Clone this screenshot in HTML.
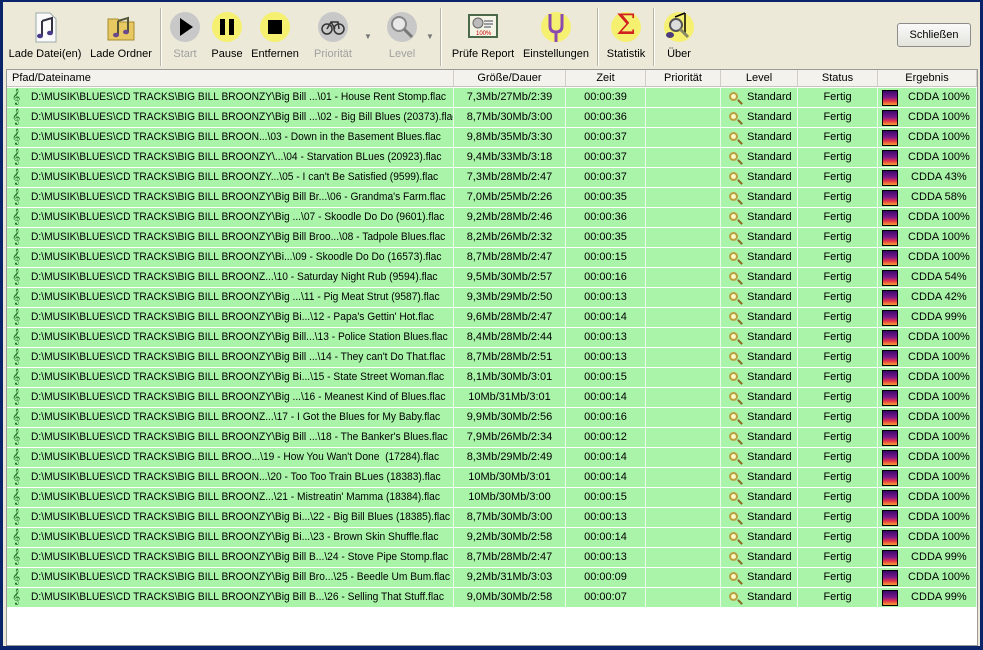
<!DOCTYPE html>
<html><head><meta charset="utf-8">
<style>
*{margin:0;padding:0;box-sizing:border-box}
html,body{width:983px;height:650px;overflow:hidden;background:#0a246a}
body{font-family:"Liberation Sans",Tahoma,sans-serif;font-size:11px;color:#000;position:relative}
#win{position:absolute;left:3px;top:2px;width:977px;height:644px;background:#ece9d8}
#tb{position:absolute;left:0;top:0;width:977px;height:66px;background:#ece9d8}
.btn{position:absolute;top:9px;text-align:center;font-size:11px;white-space:nowrap}
.btn .ic{width:32px;height:32px;margin:0 auto 5px;position:relative}
.btn.dis{color:#a0a0a0}
.sep{position:absolute;top:6px;width:2px;height:58px;border-left:1px solid #b8b4a4;border-right:1px solid #fff}
.circ{width:30px;height:30px;border-radius:50%;position:absolute;left:1px;top:1px}
.dd{position:absolute;top:30px;font-size:8px;color:#777}
#close{position:absolute;left:894px;top:21px;width:74px;height:24px;border:1px solid #8c8c8c;border-radius:3px;background:linear-gradient(#fafafa,#e4e4dc);text-align:center;line-height:22px;font-size:11px}
#list{position:absolute;left:3px;top:67px;width:972px;height:577px;background:#fff;border:1px solid #9a9a9a}
#hdr{position:absolute;left:0;top:0;height:17px;width:970px;background:#f3f2ec;border-bottom:1px solid #c8c6bc}
.hc{position:absolute;top:0;height:17px;line-height:17px;border-right:1px solid #d0cec4;text-align:center}
.row{position:absolute;left:0;height:19px;width:970px;background:#a9f4a9}
.c{position:absolute;top:0;height:19px;line-height:19px;border-right:1px solid #e8fbe8;white-space:nowrap;overflow:hidden;text-align:center}
.p{left:0;width:447px;text-align:left;padding-left:24px}
.p .t{display:inline-block;transform:scaleX(.93);transform-origin:left center}
.s{left:447px;width:112px}
.z{left:559px;width:80px}
.pr{left:639px;width:75px}
.l{left:714px;width:77px;text-align:left;padding-left:26px}
.st{left:791px;width:80px}
.e{left:871px;width:99px;text-align:left;padding-left:30px}
.clef{position:absolute;left:5px;top:2px;font-size:14px;line-height:15px;color:#1a6a1a;font-family:"DejaVu Sans",sans-serif}
.mag{position:absolute;left:8px;top:4px;width:9px;height:9px;border-radius:50%;border:2px solid #b8a040;background:#fff8c0}
.mag:after{content:"";position:absolute;left:6px;top:7px;width:6px;height:2px;background:#8a6a20;transform:rotate(45deg)}
.spec{position:absolute;left:4px;top:2px;width:16px;height:16px;border:1px solid #000;background:linear-gradient(#3a0a6a,#7a1a8a 45%,#e0304a 70%,#f8a030)}
</style></head><body>
<div id="win">
<div id="tb">
 <div class="btn" style="left:5px;width:74px"><div class="ic">
  <svg width="32" height="32"><path d="M7 2h14l6 6v23H7z" fill="#fafafa" stroke="#9aa"/><path d="M13 10l10-3v15" fill="none" stroke="#334" stroke-width="2"/><path d="M13 10v15" stroke="#334" stroke-width="2"/><ellipse cx="11" cy="25" rx="3" ry="2.3" fill="#4a3a8a"/><ellipse cx="21" cy="22" rx="3" ry="2.3" fill="#4a3a8a"/></svg></div>Lade Datei(en)</div>
 <div class="btn" style="left:85px;width:66px"><div class="ic">
  <svg width="32" height="32"><path d="M3 8h10l2 3h14v18H3z" fill="#e8c860" stroke="#a88a30"/><path d="M13 10l10-3v14" fill="none" stroke="#553" stroke-width="2"/><path d="M13 10v14" stroke="#553" stroke-width="2"/><ellipse cx="11" cy="24" rx="3" ry="2.3" fill="#6a4a8a"/><ellipse cx="21" cy="21" rx="3" ry="2.3" fill="#6a4a8a"/></svg></div>Lade Ordner</div>
 <div class="sep" style="left:157px"></div>
 <div class="btn dis" style="left:165px;width:34px"><div class="ic"><div class="circ" style="background:#c8c8c8"></div><svg width="32" height="32" style="position:absolute;left:0;top:0"><path d="M11 7l13 9-13 9z" fill="#000"/></svg></div>Start</div>
 <div class="btn" style="left:205px;width:38px"><div class="ic"><div class="circ" style="background:#f6f070"></div><svg width="32" height="32" style="position:absolute;left:0;top:0"><rect x="9" y="8" width="5" height="16" fill="#000"/><rect x="18" y="8" width="5" height="16" fill="#000"/></svg></div>Pause</div>
 <div class="btn" style="left:245px;width:54px"><div class="ic"><div class="circ" style="background:#f6f070"></div><svg width="32" height="32" style="position:absolute;left:0;top:0"><rect x="9" y="9" width="14" height="14" fill="#000"/></svg></div>Entfernen</div>
 <div class="btn dis" style="left:307px;width:46px"><div class="ic"><div class="circ" style="background:#c8c8c8"></div><svg width="32" height="32" style="position:absolute;left:0;top:0"><circle cx="10" cy="18" r="5" fill="none" stroke="#333" stroke-width="1.5"/><circle cx="22" cy="18" r="5" fill="none" stroke="#333" stroke-width="1.5"/><path d="M10 18l4-7h7l1 7M14 11l4 7" fill="none" stroke="#333" stroke-width="1.5"/></svg></div>Priorität</div>
 <div class="dd" style="left:361px">▼</div>
 <div class="btn dis" style="left:380px;width:38px"><div class="ic"><div class="circ" style="background:#c8c8c8"></div><svg width="32" height="32" style="position:absolute;left:0;top:0"><circle cx="13" cy="13" r="7" fill="#e8e8e8" stroke="#888" stroke-width="2"/><path d="M18 18l8 8" stroke="#777" stroke-width="3"/></svg></div>Level</div>
 <div class="dd" style="left:423px">▼</div>
 <div class="sep" style="left:437px"></div>
 <div class="btn" style="left:445px;width:70px"><div class="ic"><svg width="32" height="32"><rect x="2" y="4" width="28" height="22" fill="#f4f4e4" stroke="#4a6a4a" stroke-width="2"/><circle cx="11" cy="12" r="5" fill="#bbb" stroke="#666"/><path d="M17 10h9M17 13h9M17 16h7" stroke="#446"/><text x="9" y="24" font-size="6" fill="#c00" font-family="Liberation Sans">100%</text></svg></div>Prüfe Report</div>
 <div class="btn" style="left:518px;width:70px"><div class="ic"><div class="circ" style="background:#f6f070"></div><svg width="32" height="32" style="position:absolute;left:0;top:0"><path d="M10 3v12q0 6 6 6q6 0 6-6V3M16 21v10" fill="none" stroke="#8a4ab0" stroke-width="3"/></svg></div>Einstellungen</div>
 <div class="sep" style="left:594px"></div>
 <div class="btn" style="left:600px;width:46px"><div class="ic"><div class="circ" style="background:#f6f070"></div><div style="position:absolute;left:0;top:-3px;width:32px;text-align:center;font-size:28px;color:#d02020;font-family:'DejaVu Serif',serif">Σ</div></div>Statistik</div>
 <div class="sep" style="left:650px"></div>
 <div class="btn" style="left:658px;width:36px"><div class="ic"><div class="circ" style="background:#f6f070"></div><svg width="32" height="32" style="position:absolute;left:0;top:0"><path d="M22 2v20" stroke="#000" stroke-width="1.5"/><path d="M12 6l10-4" stroke="#000" stroke-width="1.5"/><circle cx="13" cy="14" r="6" fill="#ddd" stroke="#555" stroke-width="2"/><path d="M17 18l8 8" stroke="#886" stroke-width="3"/><ellipse cx="7" cy="24" rx="4" ry="3" fill="#4a3a7a"/></svg></div>Über</div>
 <div id="close">Schließen</div>
</div>
<div id="list">
 <div id="hdr">
  <div class="hc" style="left:0;width:447px;text-align:left;padding-left:5px">Pfad/Dateiname</div>
  <div class="hc" style="left:447px;width:112px">Größe/Dauer</div>
  <div class="hc" style="left:559px;width:80px">Zeit</div>
  <div class="hc" style="left:639px;width:75px">Priorität</div>
  <div class="hc" style="left:714px;width:77px">Level</div>
  <div class="hc" style="left:791px;width:80px">Status</div>
  <div class="hc" style="left:871px;width:99px">Ergebnis</div>
 </div>
<div class="row" style="top:18px"><div class="c p"><span class="clef">𝄞</span><span class="t">D:\MUSIK\BLUES\CD TRACKS\BIG BILL BROONZY\Big Bill ...\01 - House Rent Stomp.flac</span></div><div class="c s">7,3Mb/27Mb/2:39</div><div class="c z">00:00:39</div><div class="c pr"></div><div class="c l"><span class="mag"></span>Standard</div><div class="c st">Fertig</div><div class="c e"><span class="spec"></span>CDDA 100%</div></div>
<div class="row" style="top:38px"><div class="c p"><span class="clef">𝄞</span><span class="t">D:\MUSIK\BLUES\CD TRACKS\BIG BILL BROONZY\Big Bill ...\02 - Big Bill Blues (20373).flac</span></div><div class="c s">8,7Mb/30Mb/3:00</div><div class="c z">00:00:36</div><div class="c pr"></div><div class="c l"><span class="mag"></span>Standard</div><div class="c st">Fertig</div><div class="c e"><span class="spec"></span>CDDA 100%</div></div>
<div class="row" style="top:58px"><div class="c p"><span class="clef">𝄞</span><span class="t">D:\MUSIK\BLUES\CD TRACKS\BIG BILL BROON...\03 - Down in the Basement Blues.flac</span></div><div class="c s">9,8Mb/35Mb/3:30</div><div class="c z">00:00:37</div><div class="c pr"></div><div class="c l"><span class="mag"></span>Standard</div><div class="c st">Fertig</div><div class="c e"><span class="spec"></span>CDDA 100%</div></div>
<div class="row" style="top:78px"><div class="c p"><span class="clef">𝄞</span><span class="t">D:\MUSIK\BLUES\CD TRACKS\BIG BILL BROONZY\...\04 - Starvation BLues (20923).flac</span></div><div class="c s">9,4Mb/33Mb/3:18</div><div class="c z">00:00:37</div><div class="c pr"></div><div class="c l"><span class="mag"></span>Standard</div><div class="c st">Fertig</div><div class="c e"><span class="spec"></span>CDDA 100%</div></div>
<div class="row" style="top:98px"><div class="c p"><span class="clef">𝄞</span><span class="t">D:\MUSIK\BLUES\CD TRACKS\BIG BILL BROONZY...\05 - I can't Be Satisfied (9599).flac</span></div><div class="c s">7,3Mb/28Mb/2:47</div><div class="c z">00:00:37</div><div class="c pr"></div><div class="c l"><span class="mag"></span>Standard</div><div class="c st">Fertig</div><div class="c e"><span class="spec"></span>&nbsp;CDDA 43%</div></div>
<div class="row" style="top:118px"><div class="c p"><span class="clef">𝄞</span><span class="t">D:\MUSIK\BLUES\CD TRACKS\BIG BILL BROONZY\Big Bill Br...\06 - Grandma's Farm.flac</span></div><div class="c s">7,0Mb/25Mb/2:26</div><div class="c z">00:00:35</div><div class="c pr"></div><div class="c l"><span class="mag"></span>Standard</div><div class="c st">Fertig</div><div class="c e"><span class="spec"></span>&nbsp;CDDA 58%</div></div>
<div class="row" style="top:138px"><div class="c p"><span class="clef">𝄞</span><span class="t">D:\MUSIK\BLUES\CD TRACKS\BIG BILL BROONZY\Big ...\07 - Skoodle Do Do (9601).flac</span></div><div class="c s">9,2Mb/28Mb/2:46</div><div class="c z">00:00:36</div><div class="c pr"></div><div class="c l"><span class="mag"></span>Standard</div><div class="c st">Fertig</div><div class="c e"><span class="spec"></span>CDDA 100%</div></div>
<div class="row" style="top:158px"><div class="c p"><span class="clef">𝄞</span><span class="t">D:\MUSIK\BLUES\CD TRACKS\BIG BILL BROONZY\Big Bill Broo...\08 - Tadpole Blues.flac</span></div><div class="c s">8,2Mb/26Mb/2:32</div><div class="c z">00:00:35</div><div class="c pr"></div><div class="c l"><span class="mag"></span>Standard</div><div class="c st">Fertig</div><div class="c e"><span class="spec"></span>CDDA 100%</div></div>
<div class="row" style="top:178px"><div class="c p"><span class="clef">𝄞</span><span class="t">D:\MUSIK\BLUES\CD TRACKS\BIG BILL BROONZY\Bi...\09 - Skoodle Do Do (16573).flac</span></div><div class="c s">8,7Mb/28Mb/2:47</div><div class="c z">00:00:15</div><div class="c pr"></div><div class="c l"><span class="mag"></span>Standard</div><div class="c st">Fertig</div><div class="c e"><span class="spec"></span>CDDA 100%</div></div>
<div class="row" style="top:198px"><div class="c p"><span class="clef">𝄞</span><span class="t">D:\MUSIK\BLUES\CD TRACKS\BIG BILL BROONZ...\10 - Saturday Night Rub (9594).flac</span></div><div class="c s">9,5Mb/30Mb/2:57</div><div class="c z">00:00:16</div><div class="c pr"></div><div class="c l"><span class="mag"></span>Standard</div><div class="c st">Fertig</div><div class="c e"><span class="spec"></span>&nbsp;CDDA 54%</div></div>
<div class="row" style="top:218px"><div class="c p"><span class="clef">𝄞</span><span class="t">D:\MUSIK\BLUES\CD TRACKS\BIG BILL BROONZY\Big ...\11 - Pig Meat Strut (9587).flac</span></div><div class="c s">9,3Mb/29Mb/2:50</div><div class="c z">00:00:13</div><div class="c pr"></div><div class="c l"><span class="mag"></span>Standard</div><div class="c st">Fertig</div><div class="c e"><span class="spec"></span>&nbsp;CDDA 42%</div></div>
<div class="row" style="top:238px"><div class="c p"><span class="clef">𝄞</span><span class="t">D:\MUSIK\BLUES\CD TRACKS\BIG BILL BROONZY\Big Bi...\12 - Papa's Gettin' Hot.flac</span></div><div class="c s">9,6Mb/28Mb/2:47</div><div class="c z">00:00:14</div><div class="c pr"></div><div class="c l"><span class="mag"></span>Standard</div><div class="c st">Fertig</div><div class="c e"><span class="spec"></span>&nbsp;CDDA 99%</div></div>
<div class="row" style="top:258px"><div class="c p"><span class="clef">𝄞</span><span class="t">D:\MUSIK\BLUES\CD TRACKS\BIG BILL BROONZY\Big Bill...\13 - Police Station Blues.flac</span></div><div class="c s">8,4Mb/28Mb/2:44</div><div class="c z">00:00:13</div><div class="c pr"></div><div class="c l"><span class="mag"></span>Standard</div><div class="c st">Fertig</div><div class="c e"><span class="spec"></span>CDDA 100%</div></div>
<div class="row" style="top:278px"><div class="c p"><span class="clef">𝄞</span><span class="t">D:\MUSIK\BLUES\CD TRACKS\BIG BILL BROONZY\Big Bill ...\14 - They can't Do That.flac</span></div><div class="c s">8,7Mb/28Mb/2:51</div><div class="c z">00:00:13</div><div class="c pr"></div><div class="c l"><span class="mag"></span>Standard</div><div class="c st">Fertig</div><div class="c e"><span class="spec"></span>CDDA 100%</div></div>
<div class="row" style="top:298px"><div class="c p"><span class="clef">𝄞</span><span class="t">D:\MUSIK\BLUES\CD TRACKS\BIG BILL BROONZY\Big Bi...\15 - State Street Woman.flac</span></div><div class="c s">8,1Mb/30Mb/3:01</div><div class="c z">00:00:15</div><div class="c pr"></div><div class="c l"><span class="mag"></span>Standard</div><div class="c st">Fertig</div><div class="c e"><span class="spec"></span>CDDA 100%</div></div>
<div class="row" style="top:318px"><div class="c p"><span class="clef">𝄞</span><span class="t">D:\MUSIK\BLUES\CD TRACKS\BIG BILL BROONZY\Big ...\16 - Meanest Kind of Blues.flac</span></div><div class="c s">10Mb/31Mb/3:01</div><div class="c z">00:00:14</div><div class="c pr"></div><div class="c l"><span class="mag"></span>Standard</div><div class="c st">Fertig</div><div class="c e"><span class="spec"></span>CDDA 100%</div></div>
<div class="row" style="top:338px"><div class="c p"><span class="clef">𝄞</span><span class="t">D:\MUSIK\BLUES\CD TRACKS\BIG BILL BROONZ...\17 - I Got the Blues for My Baby.flac</span></div><div class="c s">9,9Mb/30Mb/2:56</div><div class="c z">00:00:16</div><div class="c pr"></div><div class="c l"><span class="mag"></span>Standard</div><div class="c st">Fertig</div><div class="c e"><span class="spec"></span>CDDA 100%</div></div>
<div class="row" style="top:358px"><div class="c p"><span class="clef">𝄞</span><span class="t">D:\MUSIK\BLUES\CD TRACKS\BIG BILL BROONZY\Big Bill ...\18 - The Banker's Blues.flac</span></div><div class="c s">7,9Mb/26Mb/2:34</div><div class="c z">00:00:12</div><div class="c pr"></div><div class="c l"><span class="mag"></span>Standard</div><div class="c st">Fertig</div><div class="c e"><span class="spec"></span>CDDA 100%</div></div>
<div class="row" style="top:378px"><div class="c p"><span class="clef">𝄞</span><span class="t">D:\MUSIK\BLUES\CD TRACKS\BIG BILL BROO...\19 - How You Wan't Done&nbsp; (17284).flac</span></div><div class="c s">8,3Mb/29Mb/2:49</div><div class="c z">00:00:14</div><div class="c pr"></div><div class="c l"><span class="mag"></span>Standard</div><div class="c st">Fertig</div><div class="c e"><span class="spec"></span>CDDA 100%</div></div>
<div class="row" style="top:398px"><div class="c p"><span class="clef">𝄞</span><span class="t">D:\MUSIK\BLUES\CD TRACKS\BIG BILL BROON...\20 - Too Too Train BLues (18383).flac</span></div><div class="c s">10Mb/30Mb/3:01</div><div class="c z">00:00:14</div><div class="c pr"></div><div class="c l"><span class="mag"></span>Standard</div><div class="c st">Fertig</div><div class="c e"><span class="spec"></span>CDDA 100%</div></div>
<div class="row" style="top:418px"><div class="c p"><span class="clef">𝄞</span><span class="t">D:\MUSIK\BLUES\CD TRACKS\BIG BILL BROONZ...\21 - Mistreatin' Mamma (18384).flac</span></div><div class="c s">10Mb/30Mb/3:00</div><div class="c z">00:00:15</div><div class="c pr"></div><div class="c l"><span class="mag"></span>Standard</div><div class="c st">Fertig</div><div class="c e"><span class="spec"></span>CDDA 100%</div></div>
<div class="row" style="top:438px"><div class="c p"><span class="clef">𝄞</span><span class="t">D:\MUSIK\BLUES\CD TRACKS\BIG BILL BROONZY\Big Bi...\22 - Big Bill Blues (18385).flac</span></div><div class="c s">8,7Mb/30Mb/3:00</div><div class="c z">00:00:13</div><div class="c pr"></div><div class="c l"><span class="mag"></span>Standard</div><div class="c st">Fertig</div><div class="c e"><span class="spec"></span>CDDA 100%</div></div>
<div class="row" style="top:458px"><div class="c p"><span class="clef">𝄞</span><span class="t">D:\MUSIK\BLUES\CD TRACKS\BIG BILL BROONZY\Big Bi...\23 - Brown Skin Shuffle.flac</span></div><div class="c s">9,2Mb/30Mb/2:58</div><div class="c z">00:00:14</div><div class="c pr"></div><div class="c l"><span class="mag"></span>Standard</div><div class="c st">Fertig</div><div class="c e"><span class="spec"></span>CDDA 100%</div></div>
<div class="row" style="top:478px"><div class="c p"><span class="clef">𝄞</span><span class="t">D:\MUSIK\BLUES\CD TRACKS\BIG BILL BROONZY\Big Bill B...\24 - Stove Pipe Stomp.flac</span></div><div class="c s">8,7Mb/28Mb/2:47</div><div class="c z">00:00:13</div><div class="c pr"></div><div class="c l"><span class="mag"></span>Standard</div><div class="c st">Fertig</div><div class="c e"><span class="spec"></span>&nbsp;CDDA 99%</div></div>
<div class="row" style="top:498px"><div class="c p"><span class="clef">𝄞</span><span class="t">D:\MUSIK\BLUES\CD TRACKS\BIG BILL BROONZY\Big Bill Bro...\25 - Beedle Um Bum.flac</span></div><div class="c s">9,2Mb/31Mb/3:03</div><div class="c z">00:00:09</div><div class="c pr"></div><div class="c l"><span class="mag"></span>Standard</div><div class="c st">Fertig</div><div class="c e"><span class="spec"></span>CDDA 100%</div></div>
<div class="row" style="top:518px"><div class="c p"><span class="clef">𝄞</span><span class="t">D:\MUSIK\BLUES\CD TRACKS\BIG BILL BROONZY\Big Bill B...\26 - Selling That Stuff.flac</span></div><div class="c s">9,0Mb/30Mb/2:58</div><div class="c z">00:00:07</div><div class="c pr"></div><div class="c l"><span class="mag"></span>Standard</div><div class="c st">Fertig</div><div class="c e"><span class="spec"></span>&nbsp;CDDA 99%</div></div>
</div>
</div>
</body></html>
